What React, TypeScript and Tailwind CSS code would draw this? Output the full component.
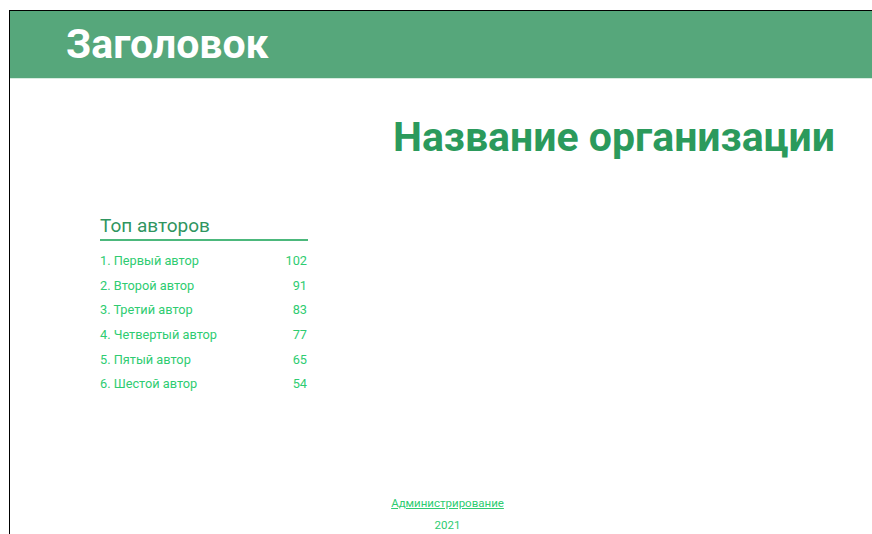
const authors = [
  { name: '1. Первый автор', count: 102, h: 'h-[26px]' },
  { name: '2. Второй автор', count: 91, h: 'h-[24px]' },
  { name: '3. Третий автор', count: 83, h: 'h-[24px]' },
  { name: '4. Четвертый автор', count: 77, h: 'h-[26px]' },
  { name: '5. Пятый автор', count: 65, h: 'h-[24px]' },
  { name: '6. Шестой автор', count: 54, h: 'h-[24px]' },
]

export default function App() {
  return (
    <div className="h-screen overflow-hidden bg-white pt-[10px] pl-[9px] font-['Roboto',sans-serif]">
      <div className="w-[880px] min-h-[600px] border-l border-t border-black flex flex-col">
        {/* Шапка */}
        <header className="h-[68px] bg-[#56a77b] border-b border-[#d7ece0] flex items-center pl-[56px]">
          <h1 className="text-[41px] font-bold text-white leading-none">Заголовок</h1>
        </header>

        <main className="flex flex-col">
          <div className="flex justify-end pr-[54px] pt-[32px]">
            <h2 className="text-[41px] font-bold text-[#2b9a5c] leading-[52px]">Название организации</h2>
          </div>

          {/* Топ авторов */}
          <section className="ml-[90px] mt-[50px] w-[208px]">
            <h3 className="text-[19px] text-[#2f9560] leading-[26px] border-b-2 border-[#4cb87c]">
              Топ авторов
            </h3>
            <ul className="mt-[7px] text-[12.75px] text-[#2ecc71]">
              {authors.map((a) => (
                <li key={a.name} className={`flex justify-between items-center ${a.h}`}>
                  <span>{a.name}</span>
                  <span className="pr-[1px]">{a.count}</span>
                </li>
              ))}
            </ul>
          </section>
        </main>

        <footer className="mt-[96px] flex flex-col items-center pr-[4px] text-[11.5px] text-[#2ecc71] leading-[22px]">
          <a href="#" className="underline">Администрирование</a>
          <span>2021</span>
        </footer>
      </div>
    </div>
  )
}
